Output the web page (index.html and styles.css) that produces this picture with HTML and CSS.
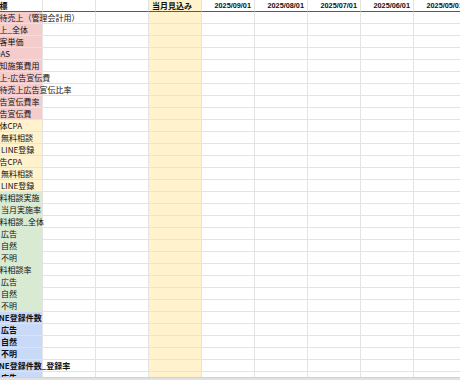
FILE: index.html
```html
<!DOCTYPE html>
<html lang="ja">
<head>
<meta charset="utf-8">
<title>指標</title>
<link rel="stylesheet" href="styles.css">
</head>
<body>
<div class="app">
  <div class="sheet">
    <table class="grid">
      <colgroup>
        <col class="c-label"><col class="c-data"><col class="c-data"><col class="c-data c-yel"><col class="c-data"><col class="c-data"><col class="c-data"><col class="c-data"><col class="c-data">
      </colgroup>
      <thead>
        <tr class="head"><th class="lbl"><span class="t">指標</span></th><th></th><th></th><th class="left">当月見込み</th><th class="date">2025/09/01</th><th class="date">2025/08/01</th><th class="date">2025/07/01</th><th class="date">2025/06/01</th><th class="date">2025/05/01</th></tr>
      </thead>
      <tbody>
        <tr class="pink"><th class="lbl"><span class="t">期待売上（管理会計用）</span></th><td></td><td></td><td></td><td></td><td></td><td></td><td></td><td></td></tr>
        <tr class="pink"><th class="lbl"><span class="t">売上_全体</span></th><td></td><td></td><td></td><td></td><td></td><td></td><td></td><td></td></tr>
        <tr class="pink"><th class="lbl"><span class="t">顧客単価</span></th><td></td><td></td><td></td><td></td><td></td><td></td><td></td><td></td></tr>
        <tr class="pink"><th class="lbl"><span class="t roas">ROAS</span></th><td></td><td></td><td></td><td></td><td></td><td></td><td></td><td></td></tr>
        <tr class="pink"><th class="lbl"><span class="t">認知施策費用</span></th><td></td><td></td><td></td><td></td><td></td><td></td><td></td><td></td></tr>
        <tr class="pink"><th class="lbl"><span class="t">売上-広告宣伝費</span></th><td></td><td></td><td></td><td></td><td></td><td></td><td></td><td></td></tr>
        <tr class="pink"><th class="lbl"><span class="t">期待売上広告宣伝比率</span></th><td></td><td></td><td></td><td></td><td></td><td></td><td></td><td></td></tr>
        <tr class="pink"><th class="lbl"><span class="t">広告宣伝費率</span></th><td></td><td></td><td></td><td></td><td></td><td></td><td></td><td></td></tr>
        <tr class="pink"><th class="lbl"><span class="t">広告宣伝費</span></th><td></td><td></td><td></td><td></td><td></td><td></td><td></td><td></td></tr>
        <tr class="yel"><th class="lbl"><span class="t">全体CPA</span></th><td></td><td></td><td></td><td></td><td></td><td></td><td></td><td></td></tr>
        <tr class="yel"><th class="lbl"><span class="t ind">無料相談</span></th><td></td><td></td><td></td><td></td><td></td><td></td><td></td><td></td></tr>
        <tr class="yel"><th class="lbl"><span class="t ind">LINE登録</span></th><td></td><td></td><td></td><td></td><td></td><td></td><td></td><td></td></tr>
        <tr class="yel"><th class="lbl"><span class="t">広告CPA</span></th><td></td><td></td><td></td><td></td><td></td><td></td><td></td><td></td></tr>
        <tr class="yel"><th class="lbl"><span class="t ind">無料相談</span></th><td></td><td></td><td></td><td></td><td></td><td></td><td></td><td></td></tr>
        <tr class="yel"><th class="lbl"><span class="t ind">LINE登録</span></th><td></td><td></td><td></td><td></td><td></td><td></td><td></td><td></td></tr>
        <tr class="green"><th class="lbl"><span class="t">無料相談実施</span></th><td></td><td></td><td></td><td></td><td></td><td></td><td></td><td></td></tr>
        <tr class="green"><th class="lbl"><span class="t ind">当月実施率</span></th><td></td><td></td><td></td><td></td><td></td><td></td><td></td><td></td></tr>
        <tr class="green"><th class="lbl"><span class="t">無料相談_全体</span></th><td></td><td></td><td></td><td></td><td></td><td></td><td></td><td></td></tr>
        <tr class="green"><th class="lbl"><span class="t ind">広告</span></th><td></td><td></td><td></td><td></td><td></td><td></td><td></td><td></td></tr>
        <tr class="green"><th class="lbl"><span class="t ind">自然</span></th><td></td><td></td><td></td><td></td><td></td><td></td><td></td><td></td></tr>
        <tr class="green"><th class="lbl"><span class="t ind">不明</span></th><td></td><td></td><td></td><td></td><td></td><td></td><td></td><td></td></tr>
        <tr class="green"><th class="lbl"><span class="t">無料相談率</span></th><td></td><td></td><td></td><td></td><td></td><td></td><td></td><td></td></tr>
        <tr class="green"><th class="lbl"><span class="t ind">広告</span></th><td></td><td></td><td></td><td></td><td></td><td></td><td></td><td></td></tr>
        <tr class="green"><th class="lbl"><span class="t ind">自然</span></th><td></td><td></td><td></td><td></td><td></td><td></td><td></td><td></td></tr>
        <tr class="green"><th class="lbl"><span class="t ind">不明</span></th><td></td><td></td><td></td><td></td><td></td><td></td><td></td><td></td></tr>
        <tr class="blue bold"><th class="lbl"><span class="t">LINE登録件数</span></th><td></td><td></td><td></td><td></td><td></td><td></td><td></td><td></td></tr>
        <tr class="blue bold"><th class="lbl"><span class="t ind">広告</span></th><td></td><td></td><td></td><td></td><td></td><td></td><td></td><td></td></tr>
        <tr class="blue bold"><th class="lbl"><span class="t ind">自然</span></th><td></td><td></td><td></td><td></td><td></td><td></td><td></td><td></td></tr>
        <tr class="blue bold"><th class="lbl"><span class="t ind">不明</span></th><td></td><td></td><td></td><td></td><td></td><td></td><td></td><td></td></tr>
        <tr class="blue bold"><th class="lbl"><span class="t">LINE登録件数_登録率</span></th><td></td><td></td><td></td><td></td><td></td><td></td><td></td><td></td></tr>
        <tr class="blue bold"><th class="lbl"><span class="t ind">広告</span></th><td></td><td></td><td></td><td></td><td></td><td></td><td></td><td></td></tr>
      </tbody>
    </table>
  </div>
  <div class="hbar"></div>
</div>
</body>
</html>
```

FILE: styles.css
```css
html, body {
  margin: 0;
  padding: 0;
  background: #ffffff;
}

body {
  width: 460px;
  height: 380px;
  overflow: hidden;
  font-family: "Noto Sans CJK JP", "Liberation Sans", sans-serif;
  font-size: 8px;
  color: #111111;
}

.app {
  display: flex;
  flex-direction: column;
  height: 380px;
}

.sheet {
  flex: 1;
  overflow: hidden;
}

.hbar {
  height: 3px;
  background: #e1e1e1;
  border-top: 1px solid #d2d2d2;
  box-sizing: border-box;
}

.grid {
  table-layout: fixed;
  border-collapse: separate;
  border-spacing: 0;
  width: 467px;
}

.c-label { width: 43px; }
.c-data { width: 53px; }
.c-yel { background: #fff2cc; }

.grid tr { height: 12px; }

.grid th,
.grid td {
  padding: 0;
  height: 11px;
  line-height: 11px;
  border-right: 1px solid #e3e3e3;
  border-bottom: 1px solid #e3e3e3;
  white-space: nowrap;
  overflow: visible;
  text-align: left;
  font-weight: normal;
}

.grid .head th {
  font-weight: bold;
  border-bottom: 1px solid #5a5a5a;
}

.grid .head .left {
  padding-left: 3px;
}

.grid .head .date {
  text-align: right;
  padding-right: 3px;
  font-family: "Liberation Sans", "Noto Sans CJK JP", sans-serif;
  font-size: 7.3px;
}

.lbl .t {
  display: inline-block;
  position: relative;
  z-index: 1;
  margin-left: -8.5px;
}

.lbl .t.roas {
  margin-left: -10.5px;
}

.lbl .t.ind {
  margin-left: 1px;
}

.pink .lbl { background: #f4cccc; }
.yel .lbl { background: #fff2cc; }
.green .lbl { background: #d9ead3; }
.blue .lbl { background: #c9daf8; }

.bold .lbl { font-weight: bold; }
```
